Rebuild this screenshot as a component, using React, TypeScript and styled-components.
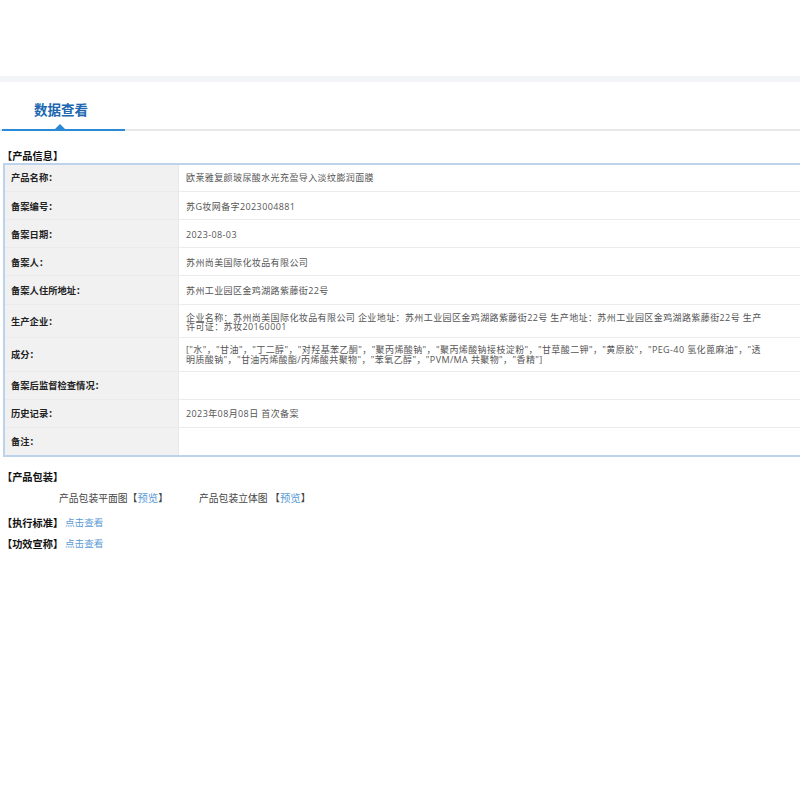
import React from "react";
import styled, { createGlobalStyle } from "styled-components";

const Global = createGlobalStyle`
  html, body { margin: 0; padding: 0; background: #fff; }
  body { font-family: "Open Sans", "Noto Sans CJK SC", sans-serif; font-size: 9px; color: #555; }
`;
const Page = styled.div`width: 800px; height: 800px; overflow: hidden; background: #fff;`;
const TopSpace = styled.div`height: 76px;`;
const Band = styled.div`height: 6px; background: #f2f4f7;`;
const TabBar = styled.div`height: 47px; border-bottom: 2px solid #e8e8e8; padding-left: 2px; display: flex;`;
const Tab = styled.div`
  position: relative; width: 123px; height: 49px; border-bottom: 2px solid #2a8ad8;
  padding-left: 32px; box-sizing: border-box;
  font-family: "Noto Sans CJK SC", sans-serif;
  font-size: 13.5px; font-weight: 700; color: #2067b0; line-height: 55px;
  &::after { content: ""; position: absolute; left: 53px; bottom: 0; border: 5px solid transparent; border-top: 0; border-bottom: 5px solid #2a8ad8; }
`;
const SectionTitle = styled.div`
  font-family: "Noto Sans CJK SC", sans-serif;
  font-size: 10.2px; font-weight: 700; color: #111; line-height: 12px; padding-left: 2px;
`;
const InfoHead = styled(SectionTitle)`margin-top: 19px; height: 13px;`;
const Table = styled.div`
  margin-left: 3px; border: 2px solid #bdd3ec; border-right: 0; width: 797px; box-sizing: border-box;
  display: flex; flex-direction: column;
`;
const Row = styled.div<{ $h: number; $shift: number }>`
  display: grid; grid-template-columns: 174px 1fr; height: ${p => p.$h}px;
  border-bottom: 1px solid #ebebeb; box-sizing: border-box;
  --shift: ${p => p.$shift}px;
  &:last-child { border-bottom: 0; }
`;
const Label = styled.div`
  background: #f1f1f1; font-weight: 700; color: #222; font-size: 9.3px; line-height: 9.5px; padding: var(--shift) 0 0 6px;
  font-family: "Noto Sans CJK SC", sans-serif;
  display: flex; align-items: center; border-right: 1px solid #e8e8e8;
`;
const Value = styled.div`
  padding: var(--shift) 34px 0 7px; display: flex; align-items: center; color: #555; font-size: 9px; letter-spacing: 0.4px; line-height: 9.5px;
`;
const ValueText = styled.span`display: block;`;
const PackHead = styled(SectionTitle)`margin-top: 14px;`;
const PackRow = styled.div`display: flex; padding-left: 59px; margin-top: 9px; line-height: 12px; font-size: 9.8px; color: #444;`;
const PackItem = styled.div<{ $w: number }>`width: ${p => p.$w}px;`;
const Preview = styled.span`color: #5b9bd5; font-size: 10.4px;`;
const LinkRow = styled.div<{ $mt: number }>`display: flex; margin-top: ${p => p.$mt}px; padding-left: 2px; line-height: 12px;`;
const LinkTitle = styled(SectionTitle)`padding-left: 0; width: 63px;`;
const Link = styled.a`color: #5b9bd5; font-size: 9.6px; text-decoration: none;`;

const rows: [string, string, number, number][] = [
  ["产品名称：", "欧莱雅复颜玻尿酸水光充盈导入淡纹膨润面膜", 27, 0],
  ["备案编号：", "苏G妆网备字2023004881", 28, 2],
  ["备案日期：", "2023-08-03", 28, 2],
  ["备案人：", "苏州尚美国际化妆品有限公司", 28, 2],
  ["备案人住所地址：", "苏州工业园区金鸡湖路紫藤街22号", 29, 2],
  ["生产企业：", "企业名称：苏州尚美国际化妆品有限公司 企业地址：苏州工业园区金鸡湖路紫藤街22号 生产地址：苏州工业园区金鸡湖路紫藤街22号 生产许可证：苏妆20160001", 33, 2],
  ["成分：", "[\"水\"，\"甘油\"，\"丁二醇\"，\"对羟基苯乙酮\"，\"聚丙烯酸钠\"，\"聚丙烯酸钠接枝淀粉\"，\"甘草酸二钾\"，\"黄原胶\"，\"PEG-40 氢化蓖麻油\"，\"透明质酸钠\"，\"甘油丙烯酸酯/丙烯酸共聚物\"，\"苯氧乙醇\"，\"PVM/MA 共聚物\"，\"香精\"]", 34, 0],
  ["备案后监督检查情况：", "", 28, 0],
  ["历史记录：", "2023年08月08日 首次备案", 28, 0],
  ["备注：", "", 27, 0],
];

export default function App() {
  return (
    <Page>
      <Global />
      <TopSpace />
      <Band />
      <TabBar><Tab>数据查看</Tab></TabBar>
      <InfoHead>【产品信息】</InfoHead>
      <Table>
        {rows.map(([l, v, h, s]) => (
          <Row key={l} $h={h} $shift={s}>
            <Label>{l}</Label>
            <Value><ValueText>{v}</ValueText></Value>
          </Row>
        ))}
      </Table>
      <PackHead>【产品包装】</PackHead>
      <PackRow>
        <PackItem $w={140}>产品包装平面图【<Preview>预览</Preview>】</PackItem>
        <PackItem $w={130}>产品包装立体图 【<Preview>预览</Preview>】</PackItem>
      </PackRow>
      <LinkRow $mt={12}><LinkTitle>【执行标准】</LinkTitle><Link href="#">点击查看</Link></LinkRow>
      <LinkRow $mt={9}><LinkTitle>【功效宣称】</LinkTitle><Link href="#">点击查看</Link></LinkRow>
    </Page>
  );
}
